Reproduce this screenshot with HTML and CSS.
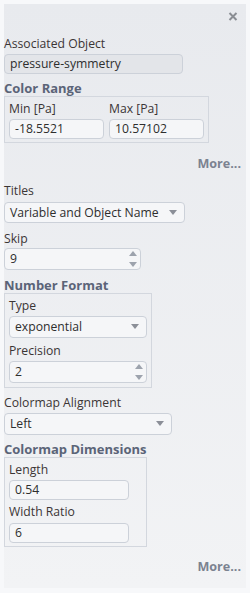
FILE: index.html
```html
<!DOCTYPE html>
<html>
<head>
<meta charset="utf-8">
<link rel="stylesheet" href="styles.css">
</head>
<body>
<div class="panel">
  <div class="topbar">
    <svg class="close" width="10" height="9" viewBox="0 0 10 9"><path d="M1.5 1L8.5 8M8.5 1L1.5 8" stroke="#8a8d93" stroke-width="2"/></svg>
  </div>

  <div class="label">Associated Object</div>
  <div class="field disabled w-ao">pressure-symmetry</div>

  <div class="section s-range">Color Range</div>
  <div class="group gr-range">
    <div class="row">
      <div class="col">
        <div class="label">Min [Pa]</div>
        <div class="field w-mm">-18.5521</div>
      </div>
      <div class="col">
        <div class="label">Max [Pa]</div>
        <div class="field w-mm">10.57102</div>
      </div>
    </div>
  </div>

  <div class="more more1">More...</div>

  <div class="label l-titles">Titles</div>
  <div class="field select w-titles">Variable and Object Name<span class="arrow"></span></div>

  <div class="label l-skip">Skip</div>
  <div class="field spin w-skip">9<span class="spinner"><span class="up"></span><span class="down"></span></span></div>

  <div class="section s-num">Number Format</div>
  <div class="group gr-num">
    <div class="label">Type</div>
    <div class="field select w-num">exponential<span class="arrow"></span></div>
    <div class="label l-prec">Precision</div>
    <div class="field spin w-num">2<span class="spinner"><span class="up"></span><span class="down"></span></span></div>
  </div>

  <div class="label l-align">Colormap Alignment</div>
  <div class="field select w-align">Left<span class="arrow"></span></div>

  <div class="section s-dim">Colormap Dimensions</div>
  <div class="group gr-dim">
    <div class="label">Length</div>
    <div class="field w-dim">0.54</div>
    <div class="label l-wr">Width Ratio</div>
    <div class="field w-dim f-wr">6</div>
  </div>

  <div class="more more2">More...</div>
</div>
</body>
</html>
```
FILE: styles.css
```css
html, body {
  margin: 0;
  padding: 0;
}
body {
  background: #f7f8fa;
  width: 250px;
  height: 593px;
  font-family: "Open Sans", "Noto Sans", sans-serif;
  font-size: 12.2px;
  color: #3a3535;
}
.panel {
  margin: 4px;
  width: 242px;
  height: 584px;
  box-sizing: border-box;
  background: linear-gradient(#e8eaee, #f2f3f5);
  display: flex;
  flex-direction: column;
  align-items: flex-start;
}
.topbar {
  align-self: stretch;
  height: 32px;
  display: flex;
  justify-content: flex-end;
  padding-right: 8px;
  padding-top: 8px;
  box-sizing: border-box;
}
.close { display: block; }
.label {
  line-height: 16px;
  height: 16px;
  color: #3b3535;
  white-space: nowrap;
}
.section {
  font-weight: bold;
  font-size: 13px;
  color: #5b6478;
  line-height: 16px;
  height: 16px;
  white-space: nowrap;
}
.field {
  box-sizing: border-box;
  height: 20px;
  border: 1px solid #ccd1d9;
  border-radius: 4px;
  background: #f5f6f8;
  padding: 0 5px;
  line-height: 18px;
  color: #2e2e2e;
  position: relative;
  margin-top: 2px;
  white-space: nowrap;
}
.field.disabled { background: #e3e5e9; }
.select, .spin { height: 22px; line-height: 20px; }
.w-ao { width: 179px; }
.w-mm { width: 95px; }
.w-titles { width: 181px; height: 21px; line-height: 19px; margin-top: 3px; }
.w-skip { width: 137px; margin-top: 1px; }
.w-num { width: 138px; }
.w-align { width: 168px; }
.w-dim { width: 120px; }

.s-range { margin-top: 6px; }
.more1 { margin-top: 13px; }
.l-titles { margin-top: 11px; }
.l-skip { margin-top: 8px; }
.s-num { margin-top: 7px; }
.l-prec { margin-top: 5px; }
.l-align { margin-top: 7px; }
.s-dim { margin-top: 6px; }
.l-wr { margin-top: 4px; }
.f-wr { margin-top: 3px; }

.group {
  border: 1px solid #d3d7de;
  box-sizing: border-box;
  padding: 4px 4px 3px 4px;
}
.gr-range { width: 205px; }
.row { display: flex; gap: 5px; }
.col { display: flex; flex-direction: column; align-items: flex-start; }
.gr-num { width: 148px; padding-bottom: 4px; }
.gr-dim { width: 143px; }

.more {
  align-self: flex-end;
  margin-right: 5px;
  font-weight: bold;
  font-size: 12.6px;
  color: #7b8290;
  line-height: 16px;
  height: 16px;
}
.more2 { margin-top: 12px; }

.arrow {
  position: absolute;
  right: 7px;
  top: 7px;
  width: 0; height: 0;
  border-left: 4px solid transparent;
  border-right: 4px solid transparent;
  border-top: 5px solid #8b8f98;
}
.spinner {
  position: absolute;
  right: 3px;
  top: 2px;
  display: flex;
  flex-direction: column;
  gap: 6px;
}
.spinner .up {
  width: 0; height: 0;
  border-left: 4px solid transparent;
  border-right: 4px solid transparent;
  border-bottom: 5px solid #9da3ad;
}
.spinner .down {
  width: 0; height: 0;
  border-left: 4px solid transparent;
  border-right: 4px solid transparent;
  border-top: 5px solid #9da3ad;
}
```
